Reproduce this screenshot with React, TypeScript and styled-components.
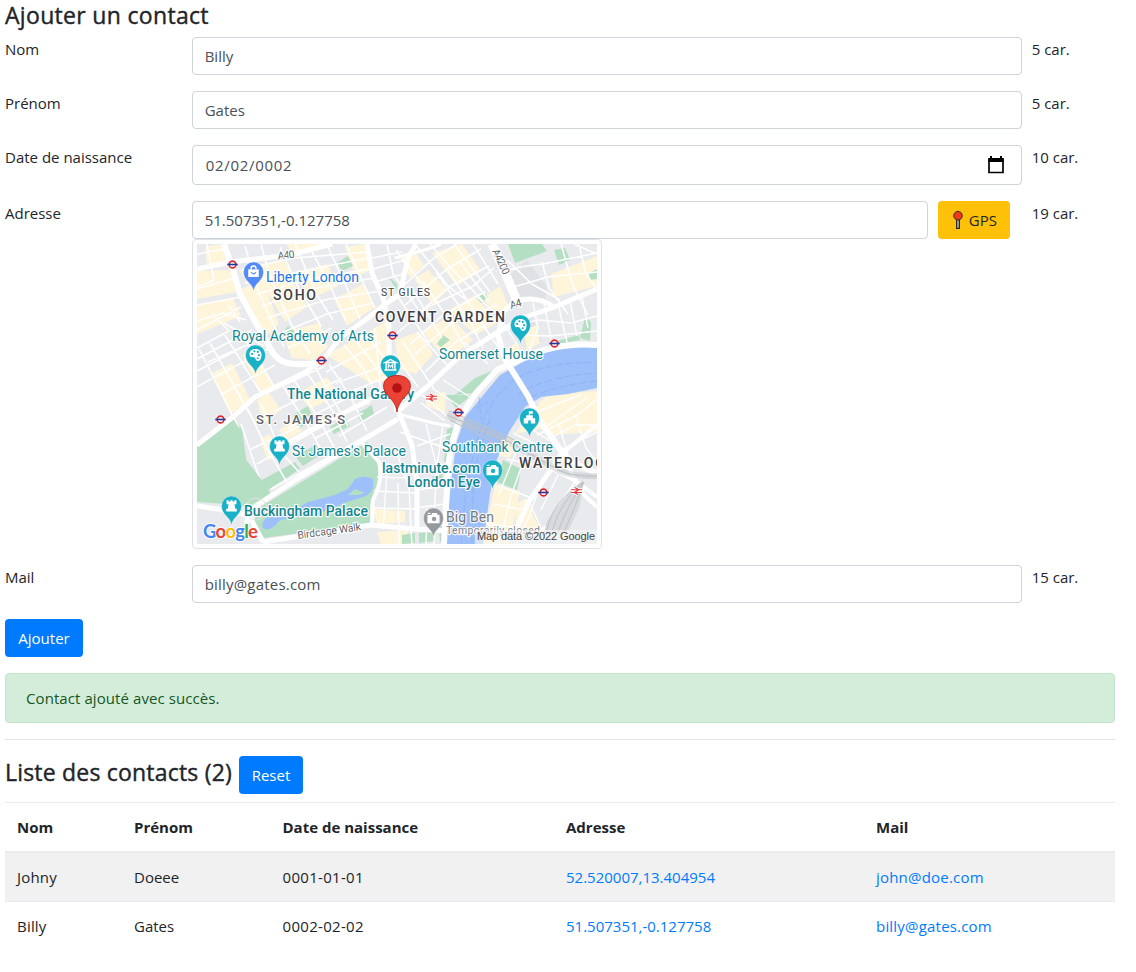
import React from "react";
import styled, { createGlobalStyle } from "styled-components";

const GlobalStyle = createGlobalStyle`
  *, *::before, *::after { box-sizing: border-box; }
  body {
    margin: 0;
    background: #fff;
    color: #212529;
    font: 400 15px/24px "Open Sans", "Noto Sans", sans-serif;
  }
`;

const Page = styled.main`
  width: 1120px;
  padding: 0 5px;
`;

const Title = styled.h4<{ $spacing: string }>`
  margin: 0;
  padding: 1px 0 7px;
  font-size: 23px;
  font-weight: 400;
  line-height: 28.8px;
  letter-spacing: ${(p) => p.$spacing};
  -webkit-text-stroke: 0.4px currentColor;
`;

const FormRow = styled.div`
  display: flex;
  margin: 0 -5px 16px;
`;

const Col = styled.div<{ $span: number }>`
  flex: 0 0 ${(p) => (p.$span / 12) * 100}%;
  padding: 0 5px;
  min-width: 0;
`;

const Label = styled.label`
  display: inline-block;
`;

const Field = styled.div<{ $tall?: boolean }>`
  display: flex;
  align-items: center;
  width: 100%;
  height: ${(p) => (p.$tall ? 40 : 38)}px;
  padding-left: ${(p) => (p.$tall ? 1 : 0)}px;
  border: 1px solid #ced4da;
  border-radius: 4px;
`;

const Input = styled.input<{ $spacing?: string }>`
  flex: 1;
  width: 100%;
  height: 100%;
  padding: 0 12px;
  border: 0;
  outline: 0;
  background: transparent;
  color: #495057;
  font: inherit;
  letter-spacing: ${(p) => p.$spacing || "0"};
`;

const CalendarIcon = styled.svg`
  flex: none;
  width: 20px;
  height: 20px;
  margin-right: 15px;
`;

const Button = styled.button<{ $tone?: "warning"; $width: number }>`
  display: inline-flex;
  align-items: center;
  justify-content: center;
  gap: 5px;
  width: ${(p) => p.$width}px;
  height: 38px;
  padding: 0;
  border: 0;
  border-radius: 4px;
  background: ${(p) => (p.$tone ? "#ffc107" : "#007bff")};
  color: ${(p) => (p.$tone ? "#212529" : "#fff")};
  font: inherit;
`;

const Thumbnail = styled.div`
  width: 410px;
  height: 310px;
  padding: 4px;
  border: 1px solid #dee2e6;
  border-radius: 4px;
  background: #fff;
`;

const MapCanvas = styled.svg`
  display: block;
  font-family: Roboto, sans-serif;
`;

const Alert = styled.div`
  height: 50px;
  margin: 16px 0;
  padding: 12px 20px;
  border: 1px solid #c3e6cb;
  border-radius: 4px;
  background: #d4edda;
  color: #155724;
  letter-spacing: 0.08px;
`;

const Divider = styled.hr`
  margin: 16px 0;
  border: 0;
  border-top: 1px solid rgba(0, 0, 0, 0.1);
`;

const ListHeader = styled.div`
  display: flex;
  align-items: center;
  gap: 7px;
  height: 38px;
  margin-bottom: 8px;
`;

const ListTitle = styled(Title)`
  padding: 0 0 4px;
`;

const Table = styled.table`
  width: 1110px;
  table-layout: fixed;
  border-collapse: collapse;
`;

const Th = styled.th<{ $width: number }>`
  width: ${(p) => p.$width}px;
  padding: 12px;
  border-top: 1px solid #e9ecef;
  border-bottom: 2px solid #e9ecef;
  text-align: left;
  font-weight: 700;
`;

const Tr = styled.tr`
  &:nth-child(odd) { background: #f1f1f1; }
`;

const Td = styled.td<{ $spacing?: string }>`
  padding: 12px;
  border-top: 1px solid #e9ecef;
  letter-spacing: ${(p) => p.$spacing || "0"};
`;

const Link = styled.a`
  color: #007bff;
  text-decoration: none;
`;

const creamBlocks = [
  "M0 27L34 26L40 48L0 55Z", "M8 3L25 0L30 19L10 20Z", "M44 45L66 36L82 80L70 92L60 76Z",
  "M42 26L88 16L98 37L54 43Z", "M90 0H132L95 10Z", "M66 40L94 34L110 63L88 78Z",
  "M96 30L130 20L141 42L116 54Z", "M137 55L166 40L178 63L150 82Z", "M148 3L168 0L174 26L159 33Z",
  "M85 88L123 79L131 103L117 116L95 114Z", "M130 111L190 77L192 137L171 138Z",
  "M0 60L36 54L44 72L0 90Z", "M15 129L35 119L54 157L33 170Z", "M45 111L58 105L77 142L64 149Z",
  "M101 149L130 133L142 151L113 165Z", "M60 156L72 149L84 166L66 180Z",
  "M198 96L222 88L236 110L219 130L202 125Z", "M225 87L253 73L276 96L249 116Z",
  "M252 66L278 51L300 79L278 91Z", "M217 35L231 26L250 46L236 61Z",
  "M204 15L218 8L227 21L213 34Z", "M235 9L265 0L284 27L260 42Z",
  "M285 54L303 42L311 61L301 71Z", "M302 110L320 98L326 109L307 116Z",
  "M354 30L400 12V42L357 53Z", "M326 86L340 81L343 99L330 106Z",
  "M317 190L350 151L400 147V166L347 184Z", "M311 193L324 199L312 214L300 211Z",
  "M298 240L323 247L312 300H286Z", "M342 157L400 149V188L355 191Z",
  "M176 265L208 267V278L180 280Z", "M180 288L211 286L210 300H184Z",
  "M230 151L249 148L248 169L229 162Z", "M319 260L329 254L342 285L318 288Z",
  "M82 186L96 177L105 187L90 196Z", "M63 195L73 190L84 211L71 217Z"
];

const parks = [
  "M0 203L35 173L45 185L49 216L67 239L73 250L53 263L30 260L0 258Z",
  "M65 262L170 198L181 220L181 243L173 260L173 280L66 294L57 276Z",
  "M140 19L151 12L156 22L145 27Z", "M311 0H345L350 7L318 19Z", "M357 6L368 4L373 16L362 21Z",
  "M258 151L278 134L302 124L279 149Z", "M249 151H275L259 164Z", "M250 185L257 183L252 218L247 218Z",
  "M306 216L324 225L320 246L300 238Z", "M388 73L394 78L393 97L383 94Z",
  "M356 98L382 91L383 96L361 100Z", "M242 282H250V298H243Z",
  "M222 289L238 287V297L222 299Z", "M205 291L218 289V299L205 300Z",
  "M96 171L111 162L117 176L102 184Z", "M133 183L148 173L153 182L137 190Z",
  "M61 238L98 218L103 225L71 246Z", "M98 212L119 201L126 209L106 222Z",
  "M160 170L175 161L177 170L164 178Z", "M86 88L91 82L98 87L95 90Z",
  "M190 31L200 40L200 46Z", "M240 100L246 91L253 96L244 103Z",
  "M279 54L287 48L291 53L284 59Z", "M392 29L400 25V35L393 36Z", "M235 233L246 230L244 240L235 241Z"
];

const minorRoads = [
  "M0 10L28 5M10 0L17 36L0 43M0 45L38 34M0 61L44 53M0 77L26 69L49 76M0 86L44 63M15 70L32 87L0 104M32 62L43 78M27 79L67 102",
  "M0 115L55 86M0 127L69 91M0 143L23 130M2 105L43 186M13 99L59 181M28 91L64 149M43 88L79 145M11 118L57 98M20 132L71 105M25 150L78 121",
  "M48 2L62 49L87 103M64 0L73 33L94 80L113 110M83 3L101 43L124 82M98 0L120 51L136 76M112 2L133 41L149 77M131 3L149 42L163 75M149 0L164 34L178 64",
  "M45 25L98 14L171 8M48 39L105 27L171 14M60 50L113 35L172 25M65 62L113 45L177 34M70 74L132 55L183 47M79 91L130 70L176 59M91 104L135 84",
  "M170 15L205 8M173 26L211 15M177 38L206 30M190 0L196 30L221 65M199 6L232 49M218 0L252 43L271 57M233 0L254 24L286 57M257 0L293 48M276 0L301 40",
  "M204 44L237 14L260 0M206 63L250 25L284 5M211 78L254 42L292 22M199 90L233 62L276 42L297 24M213 100L245 72L288 48M217 111L255 79L300 61M228 128L259 98L299 74",
  "M201 53L232 99M214 43L245 94M226 37L256 83L272 109M239 28L275 81L286 104M250 25L294 93M262 17L292 57M197 110L221 143M206 98L237 145M220 88L251 122",
  "M147 101L166 124L181 154M158 96L184 129M167 89L192 119M178 84L184 151M129 128L184 98M139 139L192 120M145 151L198 130M132 120L154 154L170 187",
  "M84 139L111 182L126 209M96 134L120 172L137 203M109 127L135 166L150 198M117 121L151 182M66 151L128 122M76 168L145 134M91 184L160 149M101 192L173 158",
  "M64 159L83 207L103 229M51 165L68 201L91 240M44 180L63 236M54 205L103 182M60 220L127 181M74 245L145 206M119 194L166 169M142 192L190 163",
  "M305 27L329 22L346 20L400 9M345 18L352 44L371 70M364 0L376 42L391 71M382 0L389 30L400 45M310 16L335 40L363 56M316 43L351 33L400 28M377 0L400 10",
  "M336 59L341 84L332 108M346 54L354 94M361 60L370 98M373 57L380 92M385 53L391 84M321 80L342 76L374 79L400 72M321 91L354 92L400 87",
  "M280 53L302 72L321 102M284 79L302 104M267 98L291 120M225 151L251 173M235 144L264 163M246 136L273 153M224 159L248 177M203 188L254 206",
  "M229 180L240 224L237 270M246 180L239 230M220 202L253 190M219 228L249 220M220 246L248 242M218 264L248 260M200 209L212 244L214 282M190 220L211 223",
  "M177 247L219 249M176 264L219 265M180 233L215 234M190 229L186 285M201 239L202 300M213 273L215 300M230 264L229 300M238 271L237 300",
  "M316 189L351 206M324 178L353 197M340 191L382 170L400 155M350 182L391 153M362 181L371 211M378 171L389 204L400 218M366 205L400 188M356 193L378 181L400 181",
  "M340 168L365 158L384 151M331 204L314 252L302 300M321 203L302 250M309 215L344 222M302 242L332 253M297 260L327 266M289 280L317 283M345 236L332 273L319 300M361 231L344 266M332 258L344 284M380 235L351 277"
];

const mainRoads: [string, number][] = [
  ["M0 25L34 18L93 11L135 0", 5],
  ["M27 0L36 25L43 50L60 81L76 109C83 119 93 121 109 120Q121 120 127 114", 6],
  ["M0 201L36 173L58 153L107 129L127 115", 5],
  ["M126 116L144 93L167 77L186 62L203 50L211 14L219 0", 5],
  ["M198 14L231 5L244 0", 3],
  ["M170 0L175 29L186 54L192 82V125L200 168", 5],
  ["M200 168L231 142L263 112L301 88L331 72L355 64L400 45", 5],
  ["M295 0L306 24L321 59", 9],
  ["M302 87L307 67L319 57Q340 51 358 64", 5],
  ["M300 88L308 115L331 152L343 177L365 208L374 218L400 229", 6],
  ["M400 101Q358 98 324 115L300 126L279 149L265 170Q254 194 251 224L247 300", 6],
  ["M201 175L103 233L57 263L49 279", 5],
  ["M74 208L111 187L173 155L198 145", 4],
  ["M202 169L215 201L220 239L220 285", 5],
  ["M165 199L182 218Q187 234 176 256L175 280", 4],
  ["M66 298L174 281L218 285L250 287", 5],
  ["M0 262L40 268L53 273L66 298", 5],
  ["M365 208L352 228L331 259L317 291", 5],
  ["M367 208L384 194L400 181M355 225L377 236L400 253", 4],
  ["M201 170L236 179L253 182", 3],
  ["M366 213L386 250L400 263M387 244L355 280L330 295", 4]
];

const tubeStations = [[35, 20.5], [195, 91.5], [124, 116.5], [357, 99.5], [23, 175.5], [261, 168.5], [346, 248.5]];

type PinKind = "art" | "museum" | "tower" | "camera" | "bag" | "centre";

function Poi({ x, y, kind, color = "#18b1c7" }: { x: number; y: number; kind: PinKind; color?: string }) {
  return (
    <g transform={`translate(${x} ${y})`}>
      <path d="M0 19C-.8 15-2.5 13-5 10.3C-8 7-10 4.5-10 0A10 10 0 0 1 10 0C10 4.5 8 7 5 10.3C2.5 13 .8 15 0 19Z" fill={color} stroke="#fff" strokeOpacity=".55" strokeWidth=".6" />
      <g transform="scale(1.1)">
        {kind === "art" && (
          <g>
            <path d="M-5.5-.5C-5.5-7 5.3-7 5.5-.5C5.6 4 3.8 6 1.5 5.2C-.4 4.5.5 2.8-1 2.2C-2.8 1.6-5.5 2.6-5.5-.5Z" fill="#fff" />
            <g fill={color}><circle cx="-3" cy="-1" r="1" /><circle cx="-1" cy="-3.4" r="1" /><circle cx="2.1" cy="-2.8" r="1" /><circle cx="3.2" cy=".2" r="1" /><circle cx="2" cy="3" r=".9" /></g>
          </g>
        )}
        {kind === "museum" && (
          <g fill="none" stroke="#fff" strokeWidth="1.3">
            <path d="M-5-2.2L0-5L5-2.2ZM-4-2V4M4-2V4M-5.5 4.5H5.5" />
            <path d="M-2 3.2V-.6L0 1.7L2-.6V3.2" strokeWidth="1.1" />
          </g>
        )}
        {kind === "tower" && (
          <path d="M-4.5-5.2H-2.7V-4H-1V-5.2H1V-4H2.7V-5.2H4.5V-1.6H2.7L3.4 2.5H4.8V5H-4.8V2.5H-3.4L-2.7-1.6H-4.5Z" fill="#fff" />
        )}
        {kind === "camera" && (
          <g>
            <path d="M-5.5-2.7H-2L-1-4.5H3L4-2.7H5.5V4.7H-5.5Z" fill="#fff" />
            <circle cy=".8" cx=".5" r="2" fill={color} />
            <path d="M-5.2-4.2H-2.7" stroke="#fff" strokeWidth="1" />
          </g>
        )}
        {kind === "bag" && (
          <g>
            <path d="M-4.8-2.4H4.8V4.5H-4.8Z" fill="#fff" />
            <path d="M-2.2-2.5V-3.3A2.2 2.2 0 0 1 2.2-3.3V-2.5" fill="none" stroke="#fff" strokeWidth="1.3" />
            <path d="M-2.2 0Q0 3.3 2.2 0" fill="none" stroke={color} strokeWidth="1.1" />
          </g>
        )}
        {kind === "centre" && (
          <g fill="#fff">
            <path d="M-5.2 5V.2H-3V-2.6H3V.2H5.2V5H1.2V2.2H-1.2V5Z" />
            <path d="M-.6-6.2H3V-3.9H.5V-2H-.6Z" />
          </g>
        )}
      </g>
    </g>
  );
}

interface MapLabelProps {
  x: number;
  y: number;
  width: number;
  size?: number;
  color?: string;
  weight?: number;
  rotate?: number;
  children: string;
}

function MapLabel({ x, y, width, size = 14, color = "#118690", weight = 400, rotate = 0, children }: MapLabelProps) {
  return (
    <text
      transform={`translate(${x} ${y}) rotate(${rotate})`}
      fontSize={size}
      fontWeight={weight}
      fill={color}
      stroke="#fff"
      strokeOpacity=".9"
      strokeWidth="2.4"
      strokeLinejoin="round"
      paintOrder="stroke"
      textLength={width}
    >
      {children}
    </text>
  );
}

function LondonMap() {
  return (
    <MapCanvas width="400" height="300" viewBox="0 0 400 300">
      <rect width="400" height="300" fill="#e8eaed" />
      <path d="M308 35L330 16L350 43L347 60L322 55ZM322 77L335 72L345 97L329 105Z" fill="#dfe1e5" />
      <path d={creamBlocks.join("")} fill="#fef5da" />
      <path d={parks.join("")} fill="#b4dfc2" />
      <path d="M400 102Q358 102 328 117L303 131L283 155L268 173L259 200L254 239L248 300H286L293 250L300 215L312 188L328 163L344 153L371 150L400 144Z" fill="#9dc0fa" />
      <g fill="none" stroke="#fff">
        <path d={minorRoads.filter((_, i) => i < 11).join("")} strokeWidth="1.6" />
        <path d={minorRoads.filter((_, i) => i >= 11).join("")} strokeWidth="1.4" clipPath="url(#land)" />
      </g>
      <clipPath id="land">
        <path d="M0 0H400V102Q358 102 328 117L303 131L283 155L268 173L259 200L254 239L248 300H0ZM400 300H286L293 250L300 215L312 188L328 163L344 153L371 150L400 144Z" />
      </clipPath>
      <path d="M0 204L35 175L45 187L49 216L67 239L73 248L53 261L30 258L0 257ZM68 262L168 201L178 220L178 243L171 260L171 278L68 292L60 276Z" fill="#b4dfc2" />
      <path d="M176 235Q166 230 158 235L151 245L138 251L111 258L93 269L74 272Q63 276 66 284Q73 289 83 276L126 268L150 258L169 252Q178 247 176 235Z" fill="#9dc0fa" />
      <path d="M158 245L168 249L160 251L151 251Z" fill="#b4dfc2" />
      <g fill="none" stroke="#86acef" strokeWidth=".7" strokeDasharray="7 3">
        <path d="M312 139Q349 116 400 119M321 150Q350 132 400 129M326 157Q354 142 400 137" />
        <path d="M311 142Q293 155 284 183T268 255L264 300M282 153L284 176M280 163L291 158M293 175Q281 204 276 240L275 300" />
      </g>
      <g fill="none" stroke="#fff" strokeLinejoin="round">
        {mainRoads.map(([d, width]) => <path key={d} d={d} strokeWidth={width} />)}
        <circle cx="59" cy="265" r="11" stroke="#dfe1e5" strokeWidth="1" />
      </g>
      <g fill="none" stroke="#bec1c5">
        <path d="M250 171L312 198L363 227Q378 233 400 232" strokeWidth="6" strokeOpacity=".45" />
        <path d="M250 171L312 198L363 227Q378 233 400 232M252 167L313 194L338 207M253 176L308 204" strokeWidth="1.2" />
      </g>
      <path d="M386 236Q366 253 350 277L347 288L370 289L382 264Q386 247 386 236Z" fill="#d7d9dd" />
      <path d="M387 238Q356 256 350 286M387 238Q364 256 355 287M387 238Q370 262 361 288M387 238Q378 264 367 288" fill="none" stroke="#bec1c5" strokeWidth="1" />

      {tubeStations.map(([x, y]) => (
        <g key={`${x}-${y}`} transform={`translate(${x + 0.5} ${y})`}>
          <circle r="4.5" fill="#fff" />
          <circle r="3.4" fill="#fff" stroke="#dc2830" strokeWidth="1.6" />
          <path d="M-5.2 0H5.2" stroke="#28369b" strokeWidth="1.7" />
        </g>
      ))}
      {[[234.5, 153.5], [379.5, 247]].map(([x, y]) => (
        <g key={x} transform={`translate(${x} ${y})`} fill="none">
          <path d="M-5.5-1.3H5.5M-5.5 1.5H5.5M-1.5-3.4L2.2-1.3L-2.2 1.5L1.5 3.6" stroke="#fff" strokeWidth="3" />
          <path d="M-5.5-1.3H5.5M-5.5 1.5H5.5M-1.5-3.4L2.2-1.3L-2.2 1.5L1.5 3.6" stroke="#e8353c" strokeWidth="1.1" />
        </g>
      ))}

      <MapLabel x={81} y={15.5} width={17} size={10.5} rotate={-6} color="#5f6368">A40</MapLabel>
      <MapLabel x={295} y={7} width={27} size={10.5} rotate={65} color="#5f6368">A4200</MapLabel>
      <MapLabel x={314} y={65} width={12} size={10.5} rotate={-17} color="#5f6368">A4</MapLabel>
      <MapLabel x={101} y={295} width={64} size={10.5} rotate={-8} color="#5f6368">Birdcage Walk</MapLabel>
      <MapLabel x={76} y={56} width={43} size={14} weight={500} color="#3c4043">SOHO</MapLabel>
      <MapLabel x={184} y={52} width={49} size={10.5} color="#3c4043">ST GILES</MapLabel>
      <MapLabel x={178} y={78} width={130} size={14} weight={500} color="#3c4043">COVENT GARDEN</MapLabel>
      <MapLabel x={59} y={180} width={89} size={13} weight={500} color="#5f6368">ST. JAMES'S</MapLabel>
      <MapLabel x={322} y={224} width={86} size={14} weight={500} color="#3c4043">WATERLOO</MapLabel>
      <MapLabel x={69} y={38} width={93} color="#1a73e8">Liberty London</MapLabel>
      <MapLabel x={35} y={97} width={142}>Royal Academy of Arts</MapLabel>
      <MapLabel x={242} y={115} width={104}>Somerset House</MapLabel>
      <MapLabel x={90} y={155} width={127} weight={500}>The National Gallery</MapLabel>
      <MapLabel x={95} y={212} width={114}>St James's Palace</MapLabel>
      <MapLabel x={245} y={208} width={111}>Southbank Centre</MapLabel>
      <MapLabel x={185} y={229} width={98} weight={500}>lastminute.com</MapLabel>
      <MapLabel x={210} y={243} width={73} weight={500}>London Eye</MapLabel>
      <MapLabel x={47} y={272} width={124} weight={500}>Buckingham Palace</MapLabel>
      <MapLabel x={249} y={278} width={48} color="#747980">Big Ben</MapLabel>
      <MapLabel x={249} y={290} width={94} size={10.5} color="#80858b">Temporarily closed</MapLabel>

      <Poi x={56.5} y={28} kind="bag" color="#528bf5" />
      <Poi x={58.5} y={111} kind="art" />
      <Poi x={323.5} y={81} kind="art" />
      <Poi x={193.5} y={121} kind="museum" />
      <Poi x={332.5} y={174} kind="centre" />
      <Poi x={82.5} y={202} kind="tower" />
      <Poi x={34.5} y={262} kind="tower" />
      <Poi x={295.5} y={226} kind="camera" />
      <Poi x={236.5} y={274} kind="camera" color="#969a9f" />
      <path d="M200 168C199 160 195 156 190 150.5C183 142 187 131.5 200 131.5S217 142 210 150.5C205 156 201 160 200 168Z" fill="#ea4335" stroke="#b31412" strokeWidth=".8" />
      <circle cx="200" cy="144" r="4.8" fill="#b31412" />

      <text x="6" y="293.5" fontSize="18.5" textLength="55" stroke="#fff" strokeWidth="2" strokeOpacity=".8" paintOrder="stroke" fontFamily="Lato, sans-serif" fontWeight="700">
        <tspan fill="#4285f4">G</tspan><tspan fill="#ea4335">o</tspan><tspan fill="#fbbc04">o</tspan><tspan fill="#4285f4">g</tspan><tspan fill="#34a853">l</tspan><tspan fill="#ea4335">e</tspan>
      </text>
      <rect x="278" y="286" width="122" height="14" fill="#f5f5f5" fillOpacity=".65" />
      <text x="280" y="296" fontSize="11" fill="#444" fontFamily="Liberation Sans, sans-serif" textLength="118">Map data ©2022 Google</text>
    </MapCanvas>
  );
}

interface TextRowProps { label: string; value: string; count: number; spacing?: string; date?: boolean }

function TextRow({ label, value, count, spacing, date }: TextRowProps) {
  return (
    <FormRow>
      <Col $span={2}><Label>{label}</Label></Col>
      <Col $span={9}>
        <Field $tall={date}>
          <Input defaultValue={value} $spacing={spacing} />
          {date && (
            <CalendarIcon viewBox="0 0 20 20">
              <path d="M3 5H17V17.5H3Z" fill="none" stroke="#000" strokeWidth="1.7" />
              <path d="M2.2 3H17.8V7H2.2ZM4 1H6V4H4ZM14 1H16V4H14Z" fill="#000" />
            </CalendarIcon>
          )}
        </Field>
      </Col>
      <Col $span={1}>{count} car.</Col>
    </FormRow>
  );
}

const contacts = [
  { nom: "Johny", prenom: "Doeee", date: "0001-01-01", adresse: "52.520007,13.404954", mail: "john@doe.com" },
  { nom: "Billy", prenom: "Gates", date: "0002-02-02", adresse: "51.507351,-0.127758", mail: "billy@gates.com" }
];

export default function App() {
  return (
    <>
      <GlobalStyle />
      <Page>
        <Title $spacing="0.32px">Ajouter un contact</Title>
        <TextRow label="Nom" value="Billy" count={5} />
        <TextRow label="Prénom" value="Gates" count={5} />
        <TextRow label="Date de naissance" value="02/02/0002" count={10} spacing="0.7px" date />
        <FormRow>
          <Col $span={2}><Label>Adresse</Label></Col>
          <Col $span={8}>
            <Field><Input defaultValue="51.507351,-0.127758" /></Field>
            <Thumbnail><LondonMap /></Thumbnail>
          </Col>
          <Col $span={1}>
            <Button $tone="warning" $width={72}>
              <svg width="12" height="20" viewBox="0 0 12 20">
                <path d="M4.6 9H7.4V18.4H4.6Z" fill="#a9adb1" stroke="#222" strokeWidth="1.1" />
                <circle cx="6" cy="5.7" r="4.3" fill="#f03a17" stroke="#222" strokeWidth=".9" />
              </svg>
              GPS
            </Button>
          </Col>
          <Col $span={1}>19 car.</Col>
        </FormRow>
        <TextRow label="Mail" value="billy@gates.com" count={15} spacing="0.2px" />
        <Button $width={78}>Ajouter</Button>
        <Alert>Contact ajouté avec succès.</Alert>
        <Divider />
        <ListHeader>
          <ListTitle $spacing="0.2px">Liste des contacts (2)</ListTitle>
          <Button $width={64}>Reset</Button>
        </ListHeader>
        <Table>
          <thead>
            <tr>
              <Th $width={117}>Nom</Th>
              <Th $width={148.5}>Prénom</Th>
              <Th $width={283.5}>Date de naissance</Th>
              <Th $width={310}>Adresse</Th>
              <Th $width={251}>Mail</Th>
            </tr>
          </thead>
          <tbody>
            {contacts.map((c) => (
              <Tr key={c.mail}>
                <Td $spacing="0.2px">{c.nom}</Td>
                <Td>{c.prenom}</Td>
                <Td $spacing="0.3px">{c.date}</Td>
                <Td><Link>{c.adresse}</Link></Td>
                <Td $spacing="0.2px"><Link>{c.mail}</Link></Td>
              </Tr>
            ))}
          </tbody>
        </Table>
      </Page>
    </>
  );
}
